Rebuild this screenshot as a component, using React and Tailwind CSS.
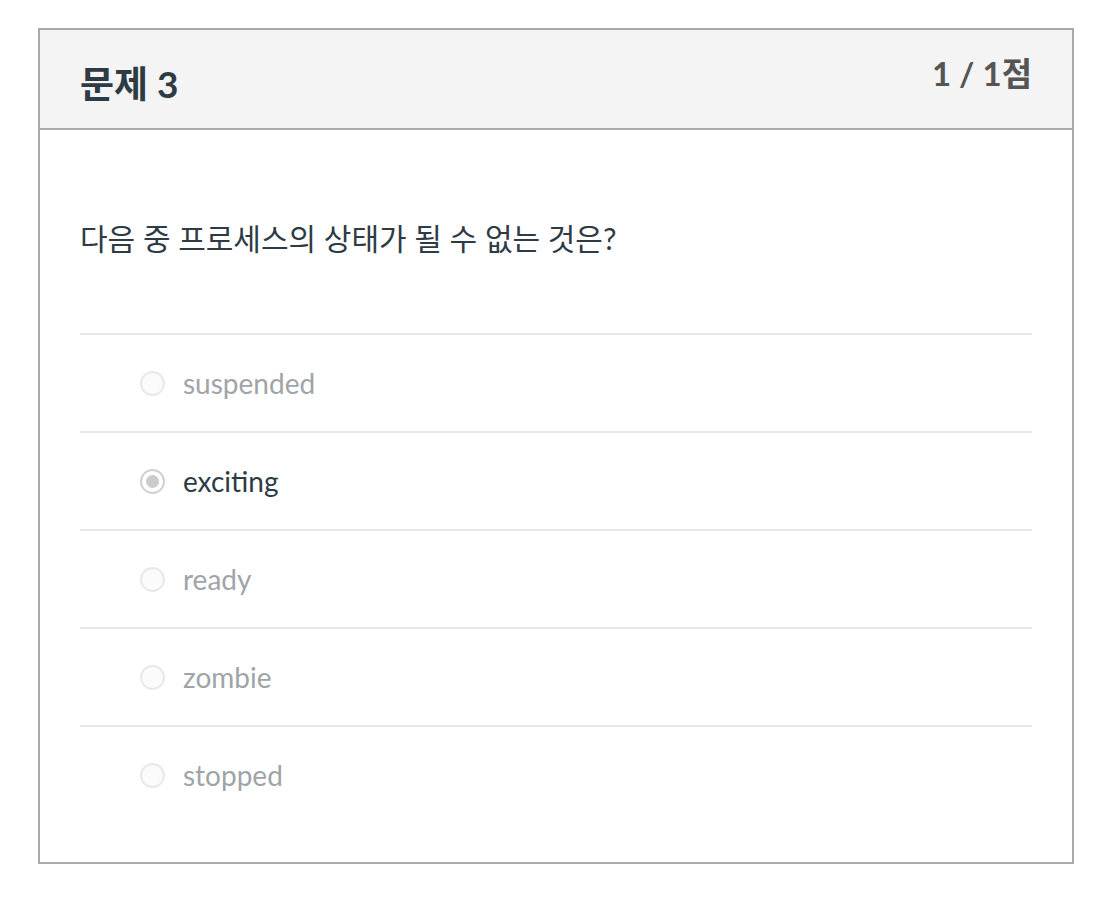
const options = [
  { label: "suspended", checked: false },
  { label: "exciting", checked: true },
  { label: "ready", checked: false },
  { label: "zombie", checked: false },
  { label: "stopped", checked: false },
];

function Radio({ checked }) {
  if (checked) {
    return (
      <span className="flex h-[25px] w-[25px] items-center justify-center rounded-full border-2 border-[#d0d0d0] bg-white">
        <span className="h-[13px] w-[13px] rounded-full bg-[#cccccc]" />
      </span>
    );
  }
  return (
    <span className="block h-[25px] w-[25px] rounded-full border-2 border-[#e8e8e8] bg-[#fbfbfb]" />
  );
}

export default function App() {
  return (
    <div className="min-h-screen bg-white pt-[28px] pl-[38px] font-['Lato','Noto_Sans_CJK_KR',sans-serif]">
      <div className="w-[1036px] border-2 border-[#aaaaaa] bg-white">
        <div className="flex h-[100px] justify-between border-b-2 border-[#aaaaaa] bg-[#f4f4f4] px-10">
          <h2 className="pt-[29px] text-[37px] font-bold leading-[50px] text-[#2d3b45]">
            문제 3
          </h2>
          <div className="pt-[21px] text-[33px] font-bold leading-[44px] text-[#555555]">
            1 / 1점
          </div>
        </div>

        <div className="px-10 pt-[90px] pb-[39px]">
          <p className="text-[30px] leading-[36px] text-[#2d3b45]">
            다음 중 프로세스의 상태가 될 수 없는 것은?
          </p>

          <ul className="mt-[77px]">
            {options.map((opt) => (
              <li
                key={opt.label}
                className="flex h-[98px] items-center gap-[18px] border-t-2 border-[#e8e8e8] pl-[60px]"
              >
                <Radio checked={opt.checked} />
                <span
                  className={`text-[28px] leading-[36px] ${
                    opt.checked ? "text-[#2d3b45]" : "text-[#a0a4a8]"
                  }`}
                >
                  {opt.label}
                </span>
              </li>
            ))}
          </ul>
        </div>
      </div>
    </div>
  );
}
